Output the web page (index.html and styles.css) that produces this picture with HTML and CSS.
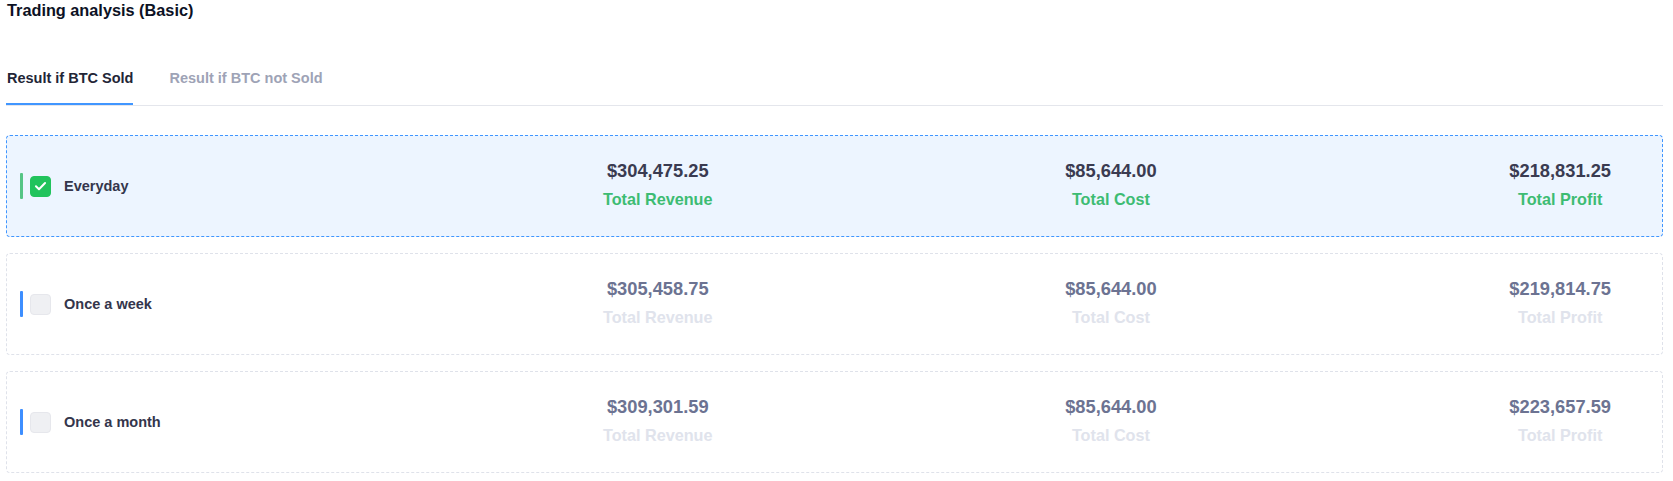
FILE: index.html
```html
<!DOCTYPE html>
<html lang="en">
<head>
<meta charset="utf-8">
<title>Trading analysis</title>
<link rel="stylesheet" href="styles.css">
</head>
<body>
<div class="page">
  <h1 class="title">Trading analysis (Basic)</h1>
  <div class="tabs">
    <div class="tab active">Result if BTC Sold</div>
    <div class="tab">Result if BTC not Sold</div>
  </div>
  <div class="list">
    <div class="card selected">
      <div class="left">
        <span class="bar"></span>
        <span class="check"><svg viewBox="0 0 20 20" width="20" height="20"><path d="M5.2 10.2l3.2 3.2 6.4-6.6" fill="none" stroke="#fff" stroke-width="2.1" stroke-linecap="round" stroke-linejoin="round"/></svg></span>
        <span class="name">Everyday</span>
      </div>
      <div class="stats">
        <div class="stat"><div class="value">$304,475.25</div><div class="label">Total Revenue</div></div>
        <div class="stat"><div class="value">$85,644.00</div><div class="label">Total Cost</div></div>
        <div class="stat"><div class="value">$218,831.25</div><div class="label">Total Profit</div></div>
      </div>
    </div>
    <div class="card">
      <div class="left">
        <span class="bar"></span>
        <span class="check"></span>
        <span class="name">Once a week</span>
      </div>
      <div class="stats">
        <div class="stat"><div class="value">$305,458.75</div><div class="label">Total Revenue</div></div>
        <div class="stat"><div class="value">$85,644.00</div><div class="label">Total Cost</div></div>
        <div class="stat"><div class="value">$219,814.75</div><div class="label">Total Profit</div></div>
      </div>
    </div>
    <div class="card">
      <div class="left">
        <span class="bar"></span>
        <span class="check"></span>
        <span class="name">Once a month</span>
      </div>
      <div class="stats">
        <div class="stat"><div class="value">$309,301.59</div><div class="label">Total Revenue</div></div>
        <div class="stat"><div class="value">$85,644.00</div><div class="label">Total Cost</div></div>
        <div class="stat"><div class="value">$223,657.59</div><div class="label">Total Profit</div></div>
      </div>
    </div>
  </div>
</div>
</body>
</html>
```

FILE: styles.css
```css
* { box-sizing: border-box; }
html, body { margin: 0; padding: 0; background: #fff; }
body { font-family: "Liberation Sans", Arial, sans-serif; }

.page {
  width: 1663px;
  padding-left: 6px;
}

.title {
  margin: 0;
  font-size: 16.3px;
  line-height: 20px;
  font-weight: 700;
  color: #0c1124;
  padding-left: 1px;
}

.tabs {
  margin-top: 47px;
  display: flex;
  gap: 35px;
  border-bottom: 1px solid #e4e6ec;
}
.tab {
  font-size: 14.5px;
  line-height: 22px;
  font-weight: 700;
  color: #9ea3b6;
  padding: 0 0 14px 1px;
  border-bottom: 2px solid transparent;
}
.tab.active {
  color: #222536;
  border-bottom-color: #4096ff;
}

.list {
  margin-top: 29px;
  display: flex;
  flex-direction: column;
  gap: 16px;
}

.card {
  height: 102px;
  display: flex;
  align-items: center;
  padding: 0 51px 0 13px;
  border: 1px dashed #dfe2ea;
  border-radius: 4px;
  background: #fff;
}
.card.selected {
  background: #edf5ff;
  border-color: #4096ff;
}

.left {
  width: 583px;
  flex: none;
  display: flex;
  align-items: center;
}
.bar {
  width: 3px;
  height: 26px;
  background: #3d8eff;
  border-radius: 1px;
}
.selected .bar { background: #55c585; }
.check {
  width: 21px;
  height: 21px;
  margin-left: 7px;
  border-radius: 4px;
  background: #eff0f3;
  border: 1px solid #e6e7ec;
  display: flex;
  align-items: center;
  justify-content: center;
}
.selected .check {
  background: #21c35c;
  border-color: #21c35c;
}
.check svg { display: block; }
.name {
  margin-left: 13px;
  font-size: 14.5px;
  font-weight: 700;
  color: #34364c;
}

.stats {
  flex: 1;
  display: flex;
  justify-content: space-between;
}
.stat {
  text-align: center;
  padding-bottom: 2px;
}
.value {
  font-size: 18.3px;
  line-height: 24px;
  font-weight: 700;
  color: #6c7392;
}
.label {
  margin-top: 4px;
  font-size: 16.2px;
  line-height: 24px;
  font-weight: 700;
  color: #e0e3ec;
}
.selected .value { color: #3a3b51; }
.selected .label { color: #3dbc73; }
```
